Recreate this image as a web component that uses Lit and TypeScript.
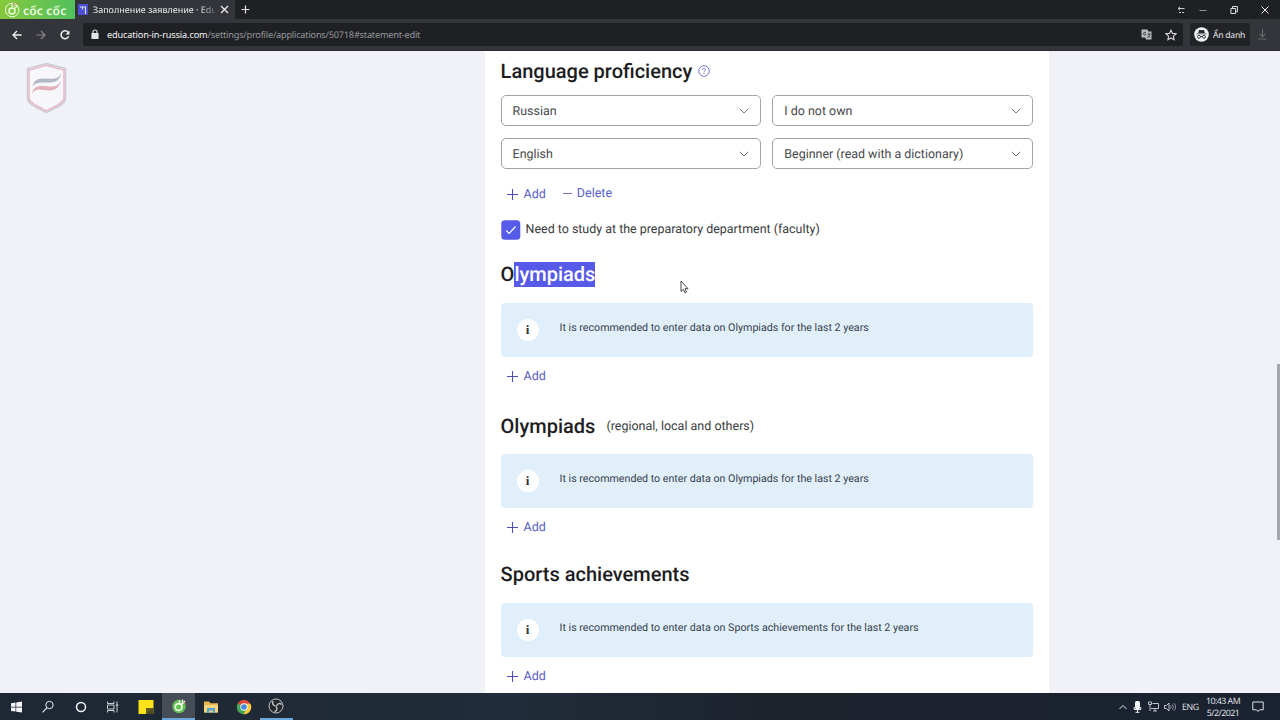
import { LitElement, html, css, svg } from 'lit';
import { customElement, property } from 'lit/decorators.js';
import { classMap } from 'lit/directives/class-map.js';

@customElement('browser-bar')
class BrowserBar extends LitElement {
  static styles = css`
    :host {
      display: block;
      height: 51px;
      flex: none;
      font-family: 'Noto Sans', 'Open Sans', sans-serif;
      color: #e8eaed;
    }
    svg {
      display: block;
      flex: none;
    }
    .tabs {
      display: flex;
      height: 19px;
      background: #1f2024;
    }
    .brand {
      display: flex;
      align-items: center;
      width: 75px;
      box-sizing: border-box;
      padding-left: 4px;
      gap: 3px;
      background: linear-gradient(90deg, #86c83c, #52c05e);
      color: #e9fbe2;
      font: 600 12px/19px 'Noto Sans', sans-serif;
      letter-spacing: 0.2px;
      white-space: nowrap;
    }
    .brand span {
      padding-top: 1px;
    }
    .tab {
      display: flex;
      align-items: center;
      width: 160px;
      box-sizing: border-box;
      padding-left: 3px;
      background: #34353a;
    }
    .title {
      width: 122px;
      margin-left: 5px;
      white-space: nowrap;
      font-size: 9px;
      line-height: 19px;
      letter-spacing: -0.02px;
      -webkit-mask-image: linear-gradient(90deg, #000 106px, transparent 128px);
    }
    .title + svg {
      margin-left: 5px;
    }
    .new-tab {
      margin: 5px 0 0 6px;
    }
    .window {
      display: flex;
      align-items: center;
      margin-left: auto;
      padding-right: 11px;
    }
    .minimize {
      margin: 0 22px 0 14px;
    }
    .restore {
      margin-right: 22px;
    }
    .toolbar {
      display: flex;
      align-items: center;
      height: 32px;
      box-sizing: border-box;
      background: #34353a;
      border-bottom: 1px solid #29292f;
      padding: 0 13px 0 12px;
    }
    .nav {
      display: flex;
      gap: 14px;
      width: 71px;
    }
    .address {
      display: flex;
      align-items: center;
      flex: 1;
      height: 23px;
      padding: 0 6px 0 7px;
      border-radius: 2px;
      background: #1f2024;
    }
    .url {
      flex: 1;
      margin-left: 7px;
      font-size: 9.2px;
      line-height: 22px;
      letter-spacing: -0.22px;
      color: #95979b;
    }
    .host {
      letter-spacing: -0.14px;
      color: #f1f3f4;
    }
    .address svg + svg {
      margin-left: 13px;
    }
    .private {
      display: flex;
      align-items: center;
      gap: 4px;
      width: 60px;
      height: 23px;
      box-sizing: border-box;
      margin: 0 8px 0 7px;
      padding-left: 4px;
      border-radius: 2px;
      background: #222327;
      font-size: 8.6px;
      letter-spacing: -0.25px;
      white-space: nowrap;
    }
  `;

  render() {
    return html`
      <div class="tabs">
        <div class="brand">
          <svg width="16" height="17" viewBox="0 0 16 17" fill="none" stroke="#efffe0">
            <circle cx="8.2" cy="9" r="6.8" stroke-width="1" />
            <circle cx="8" cy="10" r="3" stroke-width="1.5" />
            <path d="M10.6 7.5L14 4.5M8 3V6M11 2.5l-.5 3" stroke-width="1.2" />
            <path d="M9 2l2.5 2M13 2.5l1.6 1.6" stroke="#d76b4c" />
          </svg>
          <span>cốc cốc</span>
        </div>
        <div class="tab">
          <svg width="10" height="11" viewBox="0 0 10 11">
            <rect width="10" height="11" fill="#4d4fd0" />
            <path d="M2 3h5.5V10M4.5 3V5.5" fill="none" stroke="#dfe0ff" stroke-width="1.1" />
          </svg>
          <span class="title">Заполнение заявление · Edu</span>
          <svg width="9" height="9" viewBox="0 0 9 9" stroke="#f1f1f3" stroke-width="1.2">
            <path d="M1 1l7 7M8 1L1 8" />
          </svg>
        </div>
        <svg class="new-tab" width="9" height="9" viewBox="0 0 9 9" stroke="#e4e4e6" stroke-width="1.2">
          <path d="M4.5.5v8M.5 4.5h8" />
        </svg>
        <div class="window">
          <svg width="8" height="8" viewBox="0 0 8 8" stroke="#c9cacc" fill="none" stroke-width="1">
            <path d="M7.5 2.5H1M3 .8L1 2.5 3 4.2M2 6.5h2M5 6.5h2" />
          </svg>
          <svg class="minimize" width="8" height="8" viewBox="0 0 8 8" stroke="#8f9093"><path d="M.5 4.5h7" /></svg>
          <svg class="restore" width="10" height="8" viewBox="0 0 10 8" stroke="#dcdddf" fill="none">
            <path d="M3.5 2.2V.5h4.9v5.3H7M1.9 2.5h4.7v5H1.9z" />
          </svg>
          <svg width="8" height="8" viewBox="0 0 8 8" stroke="#f1f1f3"><path d="M.5.5l7 7M7.5.5l-7 7" /></svg>
        </div>
      </div>
      <div class="toolbar">
        <div class="nav">
          <svg width="10" height="10" viewBox="0 0 10 10" stroke="#f1f3f4" fill="none" stroke-width="1.3">
            <path d="M9.5 5H1.5M5 1L1 5l4 4" />
          </svg>
          <svg width="10" height="10" viewBox="0 0 10 10" stroke="#85868a" fill="none" stroke-width="1.2">
            <path d="M.5 5h8M5 1l4 4-4 4" />
          </svg>
          <svg width="10" height="10" viewBox="0 0 10 10" stroke="#f1f3f4" fill="none" stroke-width="1.5">
            <path d="M8.6 6.2A3.9 3.9 0 1 1 8 2.3" />
            <path d="M9.5.4v4H5.5z" fill="#f1f3f4" stroke="none" />
          </svg>
        </div>
        <div class="address">
          <svg width="10" height="11" viewBox="0 0 10 11">
            <rect x="1.4" y="4" width="7.2" height="6" rx=".6" fill="#e3e4e6" />
            <path d="M3 4.5V3a2 2 0 0 1 4 0v1.5" fill="none" stroke="#e3e4e6" stroke-width="1.1" />
          </svg>
          <div class="url"><span class="host">education-in-russia.com</span>/settings/profile/applications/50718#statement-edit</div>
          <svg width="11" height="11" viewBox="0 0 11 11">
            <path d="M.5.5h6l.8 2h3.2v8H5l-.8-2H.5z" fill="#b9babd" />
            <path d="M5 3.4H3.4a1.3 1.3 0 1 0 1.5 1.8H3.7M6.6 5h3M8 4.2V5M9 5.2C8.6 7 7.5 8 6.3 8.5M7 6.5l2 2.2" fill="none" stroke="#25262a" stroke-width=".8" />
          </svg>
          <svg width="12" height="12" viewBox="0 0 12 12" fill="none" stroke="#d8d9db" stroke-width="1.1">
            <path d="M6 1.2l1.5 3.2 3.5.4-2.6 2.4.7 3.5L6 9l-3.1 1.7.7-3.5L1 4.8l3.5-.4z" />
          </svg>
        </div>
        <div class="private">
          <svg width="15" height="15" viewBox="0 0 15 15">
            <circle cx="7.5" cy="7.5" r="7.3" fill="#f1f3f4" />
            <path d="M5 3h5l.8 3H4.2zM2.5 6.4h10v.9h-10z" fill="#2b2c30" />
            <g fill="none" stroke="#2b2c30" stroke-width=".9">
              <circle cx="5" cy="9.8" r="1.5" />
              <circle cx="10" cy="9.8" r="1.5" />
              <path d="M6.5 9.5h2" />
            </g>
          </svg>
          <span>Ẩn danh</span>
        </div>
        <svg width="9" height="11" viewBox="0 0 9 11" fill="none" stroke="#67686c" stroke-width="1.1">
          <path d="M4.5 0v7.5M1.8 5l2.7 2.7L7.2 5M.5 10h8" />
        </svg>
      </div>
    `;
  }
}

@customElement('select-field')
class SelectField extends LitElement {
  @property() value = '';

  static styles = css`
    :host {
      display: flex;
      align-items: center;
      justify-content: space-between;
      height: 31px;
      box-sizing: border-box;
      padding: 0 11px;
      border: 1px solid #a3a3a3;
      border-radius: 5px;
      background: #fff;
      color: #48494c;
      font-size: 12.45px;
    }
    span {
      padding-top: 2px;
    }
  `;

  render() {
    return html`
      <span>${this.value}</span>
      <svg width="10" height="6" viewBox="0 0 10 6" fill="none" stroke="#77787b" stroke-width="1">
        <path d="M.8.8L5 5 9.2.8" />
      </svg>
    `;
  }
}

@customElement('action-link')
class ActionLink extends LitElement {
  @property() label = '';
  @property() icon = 'plus';

  static styles = css`
    :host {
      display: flex;
      align-items: center;
      color: #5b5fc7;
      font-size: 12.5px;
      line-height: 16px;
    }
    span {
      padding-top: 2px;
    }
    .plus {
      margin-right: 6px;
    }
    .minus {
      margin-right: 5px;
    }
  `;

  render() {
    return html`
      ${this.icon === 'plus'
        ? html`<svg class="plus" width="11" height="11" viewBox="0 0 11 11" stroke="#4d50bd" stroke-width="1.1"><path d="M5.5 0v11M0 5.5h11" /></svg>`
        : html`<svg class="minus" width="9" height="3" viewBox="0 0 9 3" stroke="#6f72d2"><path d="M0 1.5h9" /></svg>`}
      <span>${this.label}</span>
    `;
  }
}

@customElement('info-notice')
class InfoNotice extends LitElement {
  @property() text = '';

  static styles = css`
    :host {
      display: flex;
      align-items: center;
      height: 54px;
      box-sizing: border-box;
      padding-left: 16px;
      border-radius: 4px;
      background: #e0effa;
      color: #35404a;
      font-size: 10.66px;
    }
    .badge {
      display: flex;
      align-items: center;
      justify-content: center;
      width: 22px;
      height: 22px;
      margin-right: 21px;
      border-radius: 50%;
      background: #fff;
      color: #333;
      font: 700 13px/22px 'Liberation Serif', serif;
    }
    .text {
      line-height: 14px;
      padding-bottom: 4px;
      white-space: nowrap;
    }
  `;

  render() {
    return html`
      <span class="badge">i</span>
      <span class="text">${this.text}</span>
    `;
  }
}

@customElement('task-bar')
class TaskBar extends LitElement {
  static styles = css`
    :host {
      display: flex;
      height: 27px;
      flex: none;
      background: linear-gradient(90deg, #1e2733 0, #202c39 40%, #1c222c 62%, #1a2231 100%);
      color: #e6e9ed;
      font-family: 'Open Sans', 'Noto Sans', sans-serif;
      font-size: 8.8px;
    }
    svg {
      display: block;
    }
    .items {
      display: flex;
      margin-left: -0.6px;
    }
    .item {
      display: flex;
      align-items: center;
      justify-content: center;
      width: 32.6px;
      height: 27px;
      box-sizing: border-box;
    }
    .open {
      background: #464d56;
    }
    .running {
      border-bottom: 2px solid #6aa7dc;
      padding-top: 1px;
    }
    .tray {
      display: flex;
      align-items: center;
      margin-left: auto;
    }
    .tray svg {
      margin-right: 6px;
    }
    .tray .network {
      margin-right: 5px;
    }
    .lang {
      width: 17px;
      letter-spacing: -0.4px;
    }
    .clock {
      width: 36px;
      margin-left: 6px;
      text-align: center;
      line-height: 12px;
      letter-spacing: -0.5px;
      white-space: nowrap;
    }
    .tray .notes {
      margin: 0 16px 0 11px;
    }
  `;

  items = [
    { art: svg`<path d="M3 4.2l4.5-.7v4.2H3zM8.2 3.4l5.8-.9v5.2H8.2zM3 8.4h4.5v4.2L3 11.9zM8.2 8.4H14v5.2l-5.8-.9z" fill="#f4f6f8" />` },
    { art: svg`<circle cx="9.5" cy="6" r="3.7" fill="none" stroke="#e6e9ed" /><path d="M6.9 8.8L2.5 13.4" stroke="#e6e9ed" stroke-width="1.2" />` },
    { art: svg`<circle cx="8" cy="8" r="4.5" fill="none" stroke="#f1f3f5" stroke-width="1.5" />` },
    { art: svg`<path d="M2.5 2.5v2H9v-2M2.5 13.5v-2H9v2M2.5 6H9v4H2.5zM12 2.5v11M10.8 6h2.5" fill="none" stroke="#dfe3e7" stroke-width=".9" />` },
    { art: svg`<path d="M.5 1h15v14H.5z" fill="#fbe21b" /><path d="M15.5 8.5V15H7.500z" fill="#4c4720" /><path d="M8 9h7.500L8 15z" fill="#5f581f" />` },
    {
      open: true,
      running: true,
      art: svg`<circle cx="8" cy="8.5" r="6.7" fill="#62c153" /><circle cx="7.6" cy="9" r="3.4" fill="none" stroke="#f0ffe9" stroke-width="1.6" /><path d="M10 7l4-4M8.5 2v3M11.5 1.5v3" stroke="#fff" stroke-width="1.2" /><path d="M12.5 4.5l2 1" stroke="#d36e5c" />`,
    },
    { art: svg`<path d="M1 2.5h5l1.5 1.7H15v9.3H1z" fill="#e8b64a" /><path d="M1 6h14v7.5H1z" fill="#f6d57c" /><path d="M4 9h8v5H9.8v-2.5H6.2V14H4z" fill="#53a5cf" />` },
    {
      art: svg`<circle cx="8" cy="8" r="7.2" fill="#de4b3d" /><path d="M8 8L1.8 4.4A7.2 7.2 0 0 0 7.5 15.2L11 9.7z" fill="#3fa757" /><path d="M8 4.7h6.4A7.2 7.2 0 0 1 7.5 15.2L11 9.6z" fill="#f7cb3b" /><circle cx="8" cy="8" r="3.7" fill="#f3f6f7" /><circle cx="8" cy="8" r="2.8" fill="#4688e8" />`,
    },
    {
      running: true,
      art: svg`<circle cx="8" cy="8" r="7" fill="#24262a" stroke="#c3c5c8" stroke-width="1" /><path d="M7.5 8C4.5 7.5 4 5 5.2 3.2M8.5 8c1-2.8 3.5-3 5-1.5M8 8.5c2 2.3.8 4.3-1.5 5" fill="none" stroke="#c3c5c8" stroke-width="1.4" />`,
    },
  ];

  render() {
    return html`
      <div class="items">
        ${this.items.map(
          (item) => html`
            <div class=${classMap({ item: true, open: !!item.open, running: !!item.running })}>
              <svg width="16" height="16" viewBox="0 0 16 16">${item.art}</svg>
            </div>
          `
        )}
      </div>
      <div class="tray">
        <svg width="8" height="6" viewBox="0 0 8 6" fill="none" stroke="#e6e9ed"><path d="M.5 5L4 1.5 7.5 5" /></svg>
        <svg width="9" height="12" viewBox="0 0 9 12">
          <rect x="2" y="0" width="5" height="8" rx="1.5" fill="#f1f3f5" />
          <path d="M1.2 6v2.5h6.6V6M4.5 8.5v3M2.5 11.3h4" fill="none" stroke="#f1f3f5" />
        </svg>
        <svg class="network" width="11" height="11" viewBox="0 0 11 11" fill="none" stroke="#cfd3d8" stroke-width=".9">
          <path d="M4.5 2.5h6v5H3M.5 1h3v2.5h-3zM2 3.5V10M5 10h4M7 7.5V10" />
        </svg>
        <svg width="12" height="10" viewBox="0 0 12 10" fill="none" stroke="#cfd3d8" stroke-width=".9">
          <path d="M.5 3.5h2L5 1v8L2.5 6.5h-2z" />
          <path d="M6.5 3.5a2.5 2.5 0 0 1 0 3M8.2 2.3a4 4 0 0 1 0 5.4M10 1.2a5.5 5.5 0 0 1 0 7.6" opacity=".7" />
        </svg>
        <span class="lang">ENG</span>
        <div class="clock">10:43 AM<br />5/2/2021</div>
        <svg class="notes" width="12" height="12" viewBox="0 0 12 12" fill="none" stroke="#dfe3e7">
          <path d="M.8 1h10.4v7.8H7.5L6 10.6 4.5 8.8H.8z" />
        </svg>
      </div>
    `;
  }
}

@customElement('app-root')
class AppRoot extends LitElement {
  static styles = css`
    :host {
      display: flex;
      flex-direction: column;
      width: 1280px;
      height: 720px;
      overflow: hidden;
      font-family: Roboto, 'Liberation Sans', sans-serif;
      text-rendering: geometricPrecision;
    }
    .page {
      position: relative;
      display: flex;
      flex: 1;
      min-height: 0;
      box-sizing: border-box;
      background: #f0f2f7;
    }
    .side {
      width: 485px;
      box-sizing: border-box;
      padding: 11px 0 0 26px;
    }
    .form {
      width: 564px;
      height: 642px;
      box-sizing: border-box;
      padding: 0 16px 0 15.6px;
      background: #fff;
      overflow: hidden;
    }
    .heading {
      display: flex;
      align-items: center;
      height: 40px;
      color: #1d1d1f;
    }
    h2 {
      margin: 0;
      font-size: 20px;
      font-weight: 500;
      line-height: 25px;
      white-space: nowrap;
    }
    .selected {
      display: inline-block;
      background: #5759e8;
      color: #fff;
    }
    .help {
      margin-left: 6px;
    }
    .note {
      margin-left: 11px;
      color: #3c3d40;
      font-size: 12.5px;
    }
    .fields {
      display: grid;
      gap: 12px 11px;
      grid-template-columns: 1fr 1fr;
      padding-top: 4px;
    }
    .actions {
      display: flex;
      height: 16px;
      margin: 17px 0 0 6px;
      gap: 17px;
    }
    .actions .delete {
      margin-top: -2px;
    }
    .check {
      display: flex;
      height: 20px;
      margin: 18px 0 14px;
      gap: 5px;
      color: #3a3b3e;
      font-size: 12.45px;
      line-height: 20px;
    }
    .first {
      margin-bottom: 9px;
    }
    .regional {
      margin: 22px 0 8px;
    }
    .sports {
      margin: 19px 0 9px;
    }
    .add {
      height: 16px;
      margin: 11px 0 0 6px;
    }
    .thumb {
      width: 3px;
      height: 176px;
      margin: 313px 0 0 auto;
      background: #a4a7ab;
    }
    .cursor {
      position: absolute;
      left: 680px;
      top: 229px;
    }
  `;

  render() {
    return html`
      <browser-bar></browser-bar>
      <div class="page">
        <div class="side">
          <svg width="41" height="52" viewBox="0 0 41 52" fill="none">
            <path d="M20.5 1.5L39.5 6.5V37C39 43 27 47 20.5 50.5C14 47 2 43 1.5 37V6.5z" fill="#f7f7fb" stroke="#cbc9d5" stroke-width="1.5" />
            <path d="M20.5 3.3L38 8V36.6C37.5 41.5 26.5 45.5 20.5 48.8C14.5 45.5 3.5 41.5 3 36.6V8z" stroke="#e6b8c3" stroke-width="1.5" />
            <path d="M35.5 11C34 17 31 20 25 20.5C18 21 11 18.5 6.5 24.5C8 18 12 16.5 18 16.5C26 17 32 18 35.5 11z" fill="#b3b8c7" />
            <path d="M35 19C33.5 25 30 28 24 28.5C17 29 11 24.5 6 31.5C7.5 25 11 23.5 18 24C26 25 31 25.5 35 19z" fill="#e2afba" />
          </svg>
        </div>
        <div class="form">
          <div class="heading">
            <h2>Language proficiency</h2>
            <svg class="help" width="12" height="12" viewBox="0 0 12 12" fill="none" stroke="#6669c8" stroke-width=".9">
              <circle cx="6" cy="6" r="5.3" />
              <path d="M4.5 4.8a1.5 1.5 0 1 1 2.2 1.3c-.5.3-.7.5-.7 1.1M6 8v1" />
            </svg>
          </div>
          <div class="fields">
            <select-field value="Russian"></select-field>
            <select-field value="I do not own"></select-field>
            <select-field value="English"></select-field>
            <select-field value="Beginner (read with a dictionary)"></select-field>
          </div>
          <div class="actions">
            <action-link label="Add"></action-link>
            <action-link class="delete" label="Delete" icon="minus"></action-link>
          </div>
          <div class="check">
            <svg width="20" height="20" viewBox="0 0 20 20">
              <rect x=".3" y=".3" width="19" height="19.4" rx="3.5" fill="#575bea" />
              <path d="M5.2 10.5l3 3 6.3-7" fill="none" stroke="#fff" stroke-width="1.2" />
            </svg>
            <span>Need to study at the preparatory department (faculty)</span>
          </div>
          <div class="heading first">
            <h2>O<span class="selected">lympiads</span></h2>
          </div>
          <info-notice text="It is recommended to enter data on Olympiads for the last 2 years"></info-notice>
          <action-link class="add" label="Add"></action-link>
          <div class="heading regional">
            <h2>Olympiads</h2>
            <span class="note">(regional, local and others)</span>
          </div>
          <info-notice text="It is recommended to enter data on Olympiads for the last 2 years"></info-notice>
          <action-link class="add" label="Add"></action-link>
          <div class="heading sports">
            <h2>Sports achievements</h2>
          </div>
          <info-notice text="It is recommended to enter data on Sports achievements for the last 2 years"></info-notice>
          <action-link class="add" label="Add"></action-link>
        </div>
        <div class="thumb"></div>
        <svg class="cursor" width="9" height="14" viewBox="0 0 9 14">
          <path d="M1 1v10.5l2.3-2.2 1.6 3.5 1.6-.7L5 8.7h3z" fill="#fff" stroke="#333" stroke-width=".9" />
        </svg>
      </div>
      <task-bar></task-bar>
    `;
  }
}
